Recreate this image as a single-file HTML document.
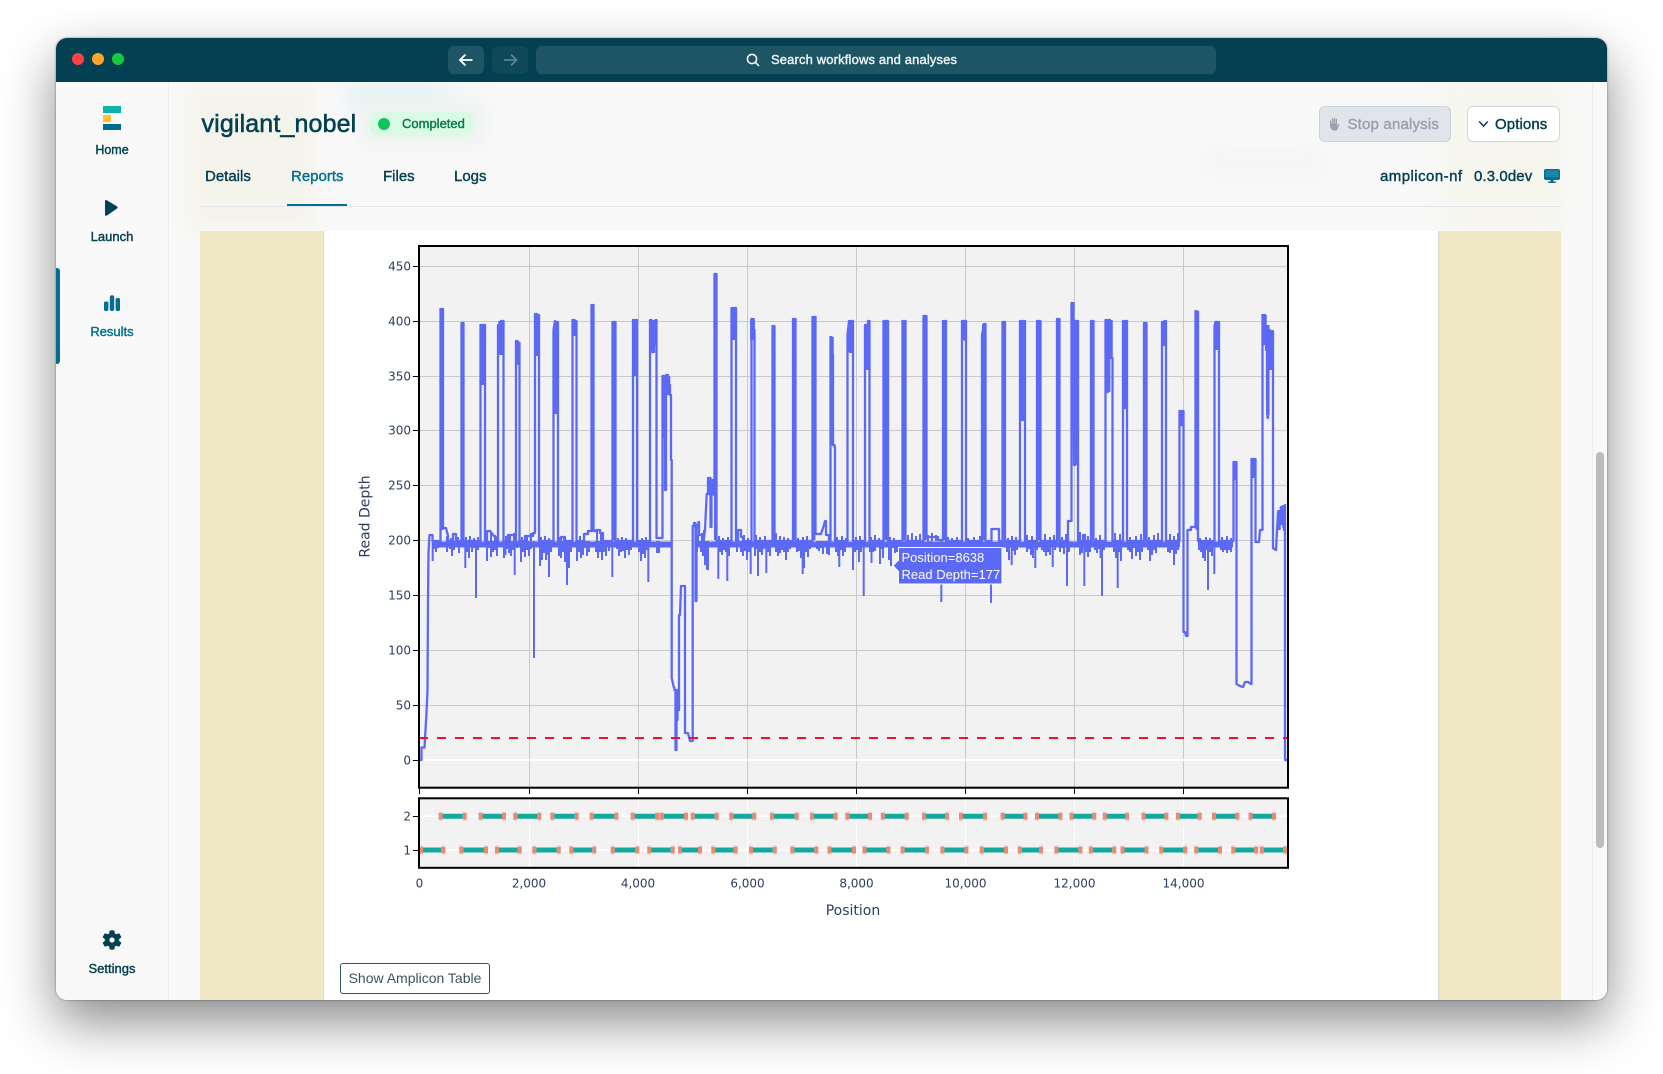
<!DOCTYPE html>
<html lang="en"><head><meta charset="utf-8"><title>vigilant_nobel</title>
<style>
html,body{margin:0;padding:0;width:1663px;height:1074px;background:#fff;overflow:hidden}
*{box-sizing:border-box}
.shadow{position:absolute;left:56px;top:38px;width:1551px;height:962px;border-radius:11px;box-shadow:0 22px 52px 0 rgba(0,0,0,.46),0 0 2px rgba(0,0,0,.45)}
.win{position:absolute;left:56px;top:38px;width:1551px;height:962px;border-radius:11px;overflow:hidden;background:#f9f9f9}
.layer{position:absolute;left:-56px;top:-38px;width:1663px;height:1074px;font-family:"Liberation Sans",sans-serif;color:#044050}
.a{position:absolute}
.t{position:absolute;white-space:nowrap;line-height:20px;-webkit-text-stroke:.4px currentColor}
.c{text-align:center}
</style></head><body>
<div class="shadow"></div>
<div class="win"><div class="layer">
  <!-- soft tints -->
  <div class="a" style="left:186px;top:82px;width:130px;height:150px;background:#f5f4ec;filter:blur(8px)"></div>
  <div class="a" style="left:1440px;top:82px;width:125px;height:150px;background:#f6f5ee;filter:blur(10px)"></div>
  <div class="a" style="left:345px;top:82px;width:105px;height:26px;background:#e4f2f5;filter:blur(10px)"></div>
  <div class="a" style="left:360px;top:100px;width:125px;height:46px;background:#edf3ef;filter:blur(10px)"></div>
  <div class="a" style="left:1205px;top:150px;width:120px;height:26px;background:#f4f4f3;filter:blur(10px)"></div>

  <!-- titlebar -->
  <div class="a" style="left:56px;top:38px;width:1551px;height:44px;background:#034052"></div>
  <div class="a" style="left:72px;top:53px;width:12px;height:12px;border-radius:50%;background:#ff4245"></div>
  <div class="a" style="left:92px;top:53px;width:12px;height:12px;border-radius:50%;background:#ffa52e"></div>
  <div class="a" style="left:112px;top:53px;width:12px;height:12px;border-radius:50%;background:#17c93f"></div>
  <div class="a" style="left:448px;top:46px;width:36px;height:28px;border-radius:6px;background:#1d5564"></div>
  <div class="a" style="left:492px;top:46px;width:36px;height:28px;border-radius:6px;background:#0f4858"></div>
  <div class="a" style="left:536px;top:46px;width:680px;height:28px;border-radius:6px;background:#1d5564"></div>
  <svg class="a" style="left:0;top:0" width="1663" height="90" fill="none">
    <path d="M472.500 60H460.500M465.500 54.500L460 60L465.500 65.500" stroke="#fff" stroke-width="1.800"/>
    <path d="M504 60H516M511 54.500L516.500 60L511 65.500" stroke="#5b8590" stroke-width="1.800"/>
    <circle cx="752" cy="59" r="4.600" stroke="#fff" stroke-width="1.500"/>
    <path d="M755.500 62.500L759 66" stroke="#fff" stroke-width="1.500"/>
  </svg>
  <div class="t" style="left:771px;top:50px;font-size:13px;letter-spacing:.14px;color:#eef4f5">Search workflows and analyses</div>

  <!-- sidebar -->
  <div class="a" style="left:56px;top:82px;width:113px;height:918px;background:#f9f9f9;border-right:1px solid #efefef"></div>
  <div class="a" style="left:56px;top:268px;width:4px;height:96px;border-radius:0 3px 3px 0;background:#026f93"></div>
  <div class="a" style="left:103px;top:106px;width:18px;height:6.500px;background:#0cb4a8"></div>
  <div class="a" style="left:103px;top:115px;width:7.500px;height:6.500px;background:#ffbf2f"></div>
  <div class="a" style="left:103px;top:123.500px;width:18px;height:6.500px;background:#026b8f"></div>
  <div class="t c" style="left:72px;top:140px;width:80px;font-size:12.500px">Home</div>
  <svg class="a" style="left:99px;top:195px" width="26" height="26"><path d="M6 6.200C6 5.200 6.900 4.700 7.800 5.200L18 11.400C18.800 11.900 18.800 13 18 13.500L7.800 20.600C6.900 21.100 6 20.600 6 19.600Z" fill="#034052"/></svg>
  <div class="t c" style="left:72px;top:227px;width:80px;font-size:13px">Launch</div>
  <svg class="a" style="left:100px;top:291px" width="24" height="24" fill="#026f93"><rect x="4" y="10.500" width="4.400" height="9.500" rx="1.600"/><rect x="9.800" y="4.300" width="4.400" height="15.700" rx="2"/><rect x="15.600" y="7" width="4.400" height="13" rx="1.600"/></svg>
  <div class="t c" style="left:72px;top:322px;width:80px;font-size:13px;color:#026f93">Results</div>
  <svg class="a" style="left:100px;top:928px" width="24" height="24" viewBox="0 0 24 24"><path fill="#034052" d="M19.14 12.94c.04-.3.06-.61.06-.94 0-.32-.02-.64-.07-.94l2.03-1.58a.49.49 0 0 0 .12-.61l-1.92-3.32a.488.488 0 0 0-.59-.22l-2.39.96c-.5-.38-1.03-.7-1.62-.94l-.36-2.54a.484.484 0 0 0-.48-.41h-3.84c-.24 0-.43.17-.47.41l-.36 2.54c-.59.24-1.13.57-1.62.94l-2.39-.96c-.22-.08-.47 0-.59.22L2.74 8.87c-.12.21-.08.47.12.61l2.03 1.58c-.05.3-.09.63-.09.94s.02.64.07.94l-2.03 1.58a.49.49 0 0 0-.12.61l1.92 3.32c.12.22.37.29.59.22l2.39-.96c.5.38 1.03.7 1.62.94l.36 2.54c.05.24.24.41.48.41h3.84c.24 0 .44-.17.47-.41l.36-2.54c.59-.24 1.13-.56 1.62-.94l2.39.96c.22.08.47 0 .59-.22l1.92-3.32c.12-.22.07-.47-.12-.61l-2.01-1.58zM12 14.6c-1.4 0-2.6-1.2-2.6-2.6s1.2-2.6 2.6-2.6 2.6 1.2 2.6 2.6-1.2 2.6-2.6 2.6z"/></svg>
  <div class="t c" style="left:72px;top:959px;width:80px;font-size:13px">Settings</div>

  <!-- header -->
  <div class="t" style="left:201.500px;top:111px;font-size:25px;line-height:26px;letter-spacing:.14px;-webkit-text-stroke:.55px currentColor;color:#034052">vigilant_nobel</div>
  <div class="a" style="left:370px;top:112px;width:103px;height:24px;border-radius:7px;background:#d9fae4"></div>
  <div class="a" style="left:378px;top:118px;width:12px;height:12px;border-radius:50%;background:#10c45c"></div>
  <div class="t" style="left:402px;top:114px;font-size:13px;color:#0a7a45">Completed</div>

  <div class="a" style="left:1319px;top:106px;width:132px;height:36px;border-radius:6px;background:#e1e4e9;border:1px solid #ced3da"></div>
  <svg class="a" style="left:1327px;top:116px" width="16" height="16" fill="#9aa1ac"><path d="M3 9V5.200c0-1 1.300-1 1.300 0V8h.5V3.200c0-1 1.400-1 1.400 0V7.500h.5V2.500c0-1 1.400-1 1.400 0v5h.5V3.500c0-1 1.400-1 1.400 0V10l1-1.600c.6-.9 1.800-.3 1.300.6l-1.700 3.600C10.600 14 9.600 14.600 8 14.600c-2.800 0-5-1.600-5-5.600z"/></svg>
  <div class="t" style="left:1347.500px;top:115px;font-size:15px;letter-spacing:.18px;color:#9aa1ac">Stop analysis</div>
  <div class="a" style="left:1467px;top:106px;width:93px;height:36px;border-radius:6px;background:#fff;border:1px solid #d3d6dc"></div>
  <svg class="a" style="left:1477px;top:118px" width="14" height="12" fill="none"><path d="M2.200 3.500L6.500 8L10.800 3.500" stroke="#034052" stroke-width="1.500"/></svg>
  <div class="t" style="left:1495px;top:115px;font-size:15px;letter-spacing:.1px;color:#034052">Options</div>

  <!-- tabs -->
  <div class="t" style="left:205px;top:167px;font-size:15px">Details</div>
  <div class="t" style="left:291px;top:167px;font-size:15px;color:#026f93">Reports</div>
  <div class="t" style="left:383px;top:167px;font-size:15px">Files</div>
  <div class="t" style="left:454px;top:167px;font-size:15px">Logs</div>
  <div class="a" style="left:201px;top:206px;width:1360px;height:1px;background:#e2e4e9"></div>
  <div class="a" style="left:287px;top:204px;width:60px;height:2px;background:#026f93"></div>
  <div class="t" style="left:1380px;top:167px;font-size:15px;letter-spacing:.45px">amplicon-nf</div>
  <div class="t" style="left:1474px;top:167px;font-size:15px;letter-spacing:.1px">0.3.0dev</div>
  <svg class="a" style="left:1544px;top:168px" width="17" height="16"><path d="M1.800 1H14.200C15.200 1 16 1.800 16 2.800V10.200C16 11.200 15.200 12 14.200 12H1.800C.8 12 0 11.200 0 10.200V2.800C0 1.800.8 1 1.800 1Z" fill="#026f93"/><rect x="1.500" y="2.500" width="13" height="6.700" fill="#1b86ab"/><rect x="6.500" y="12" width="3" height="2" fill="#026f93"/><rect x="4" y="13.500" width="8" height="1.500" rx=".7" fill="#026f93"/></svg>

  <!-- content -->
  <div class="a" style="left:200px;top:231px;width:1361px;height:769px;background:#fff"></div>
  <div class="a" style="left:200px;top:231px;width:124px;height:769px;background:#f0e8c4;border-right:1px solid #dcdcd0"></div>
  <div class="a" style="left:1438px;top:231px;width:123px;height:769px;background:#f0e8c4;border-left:1px solid #dcdcd0"></div>

  <!-- scroll -->
  <div class="a" style="left:1592px;top:82px;width:1px;height:918px;background:#ececec"></div>
  <div class="a" style="left:1596px;top:452px;width:8px;height:396px;border-radius:4px;background:#bcbcbc"></div>

  <!-- plot -->
  <svg class="a" style="left:0;top:0" width="1663" height="1074" fill="none" font-family="'DejaVu Sans',sans-serif">
    <rect x="419" y="246" width="869" height="541.700" fill="#f2f2f2"/>
    <rect x="419" y="798.300" width="869" height="69.500" fill="#f2f2f2"/>
    <path stroke="#c9c9c9" stroke-width="1" d="M529.500 246V787M638.500 246V787M747.500 246V787M856.500 246V787M965.500 246V787M1074.500 246V787M1183.500 246V787M419 266.500H1288M419 321.500H1288M419 376.500H1288M419 430.500H1288M419 485.500H1288M419 540.500H1288M419 595.500H1288M419 650.500H1288M419 705.500H1288"/>
    <path stroke="#fff" stroke-width="2" d="M419 760H1288"/>
    <path stroke="#fff" stroke-width="1" d="M529.500 798V867M638.500 798V867M747.500 798V867M856.500 798V867M965.500 798V867M1074.500 798V867M1183.500 798V867"/>
    <path stroke="#fff" stroke-width="1.500" d="M419 816.300H1288M419 850H1288"/>

    <!-- noise comb -->
    <path stroke="#5b69f6" stroke-width="6" d="M432 544.500H671M697 544.500H1180M1199 544.500H1233"/>
    <path stroke="#5b69f6" stroke-width="2" d="M432.700 541V561M434 541V549M436 541V552M438 541V548M447 541V552M450 541V549M452 541V556M454 541V550M457 541V547M459 541V553M465.300 541V568M467 541V552M469 541V558M472 541V552M474 541V548M476 541V598M478 541V550M487 541V561M489 541V548M491 541V557M493 541V552M495 541V550M497 541V556M504 541V558M505.500 541V555M507 541V549M509 541V553M511 541V556M513 541V550M514.700 541V575M517 541V548M521 541V562M523 541V552M525 541V557M527 541V550M529 541V556M531 541V549M534 541V658M540 541V566M542 541V560M544 541V553M546 541V560M548 541V555M549 541V577M551 541V552M559 541V556M561 541V558M563 541V552M565 541V562M567 541V585M569 541V568M571 541V552M577 541V561M579 541V552M581 541V558M583 541V555M585 541V548M587 541V556M589 541V552M596 541V552M598 541V558M600 541V552M602 541V560M604 541V552M606 541V556M609 541V551M612.300 541V577M617 541V549M619 541V556M621 541V552M623 541V551M625 541V558M627 541V550M629 541V555M631 541V550M639 541V552M641 541V561M643 541V554M645 541V558M647 541V550M648.300 541V582M657 541V553M659 541V553M697 541V552M699 541V545M701 541V552M703 541V556M705 541V565M707 541V570M708 541V570M718.300 541V579M720 541V552M722 541V555M724 541V550M726 541V552M727.300 541V581M729 541V556M737 541V552M739 541V547M741 541V552M743 541V556M745 541V551M747 541V560M749 541V552M750.700 541V574M755 541V556M756.500 541V549M758 541V576M760 541V552M762 541V555M764 541V549M766.300 541V573M768 541V552M770 541V556M776 541V552M778 541V556M780 541V553M782 541V550M784 541V552M786 541V560M788 541V552M790 541V549M797 541V552M799 541V551M801 541V558M802.700 541V574M804 541V568M806 541V552M808 541V557M810 541V549M817 541V549M819 541V551M821 541V548M823 541V554M825 541V546M827 541V554M829 541V555M836 541V552M838 541V556M839.300 541V567M841 541V550M843 541V556M845 541V552M853 541V570M855 541V552M857 541V550M859 541V562M861 541V552M863.700 541V596M870 541V552M871.500 541V563M873 541V552M875 541V551M877 541V544M880 541V564M881.500 541V549M883 541V558M889 541V560M891 541V566M893 541V548M895 541V553M897 541V552M899 541V550M901 541V550M907 541V547M909 541V552M912 541V547M915 541V550M918 541V546M921 541V549M928 541V550M931 541V546M941.300 541V602M948 541V549M952 541V548M955 541V550M958 541V547M968 541V550M971 541V548M975 541V550M978 541V547M988 541V549M991 541V603M1002 541V547M1007 541V552M1009 541V560M1011.700 541V565M1013 541V551M1015 541V555M1017 541V550M1027 541V552M1029 541V549M1031 541V555M1033 541V558M1035.300 541V568M1037 541V550M1042 541V550M1044 541V552M1046 541V556M1048 541V552M1050 541V555M1052.700 541V567M1055 541V550M1060 541V552M1062 541V548M1064 541V554M1067 541V586M1069 541V552M1080 541V555M1082 541V553M1084.300 541V586M1086 541V552M1088 541V557M1090 541V552M1095 541V550M1097 541V553M1099 541V549M1100.500 541V558M1102 541V596M1104 541V550M1114 541V552M1116 541V558M1117.700 541V588M1119 541V552M1121 541V561M1128 541V550M1130 541V552M1132 541V559M1134 541V548M1136 541V556M1138 541V552M1140 541V560M1142 541V552M1148 541V550M1150 541V561M1152 541V555M1154 541V550M1156 541V553M1158 541V546M1168 541V552M1170 541V553M1172 541V550M1174 541V565M1176 541V554M1178 541V550M1199 541V550M1201 541V552M1203 541V558M1205 541V561M1207 541V550M1208 541V590M1210 541V552M1212 541V556M1214.300 541V574M1221 541V550M1223 541V552M1225 541V550M1227 541V553M1229 541V550M1231 541V552"/>
    <!-- top noise -->
    <path stroke="#5b69f6" stroke-width="2" d="M447 541V536M451 541V538M458 541V537M466 541V537M470 541V536M474 541V538M478 541V537M491 541V533M495 541V535M506 541V536M510 541V534M514 541V533M522 541V537M527 541V535M531 541V533M541 541V537M545 541V536M549 541V538M560 541V537M564 541V538M580 541V536M584 541V534M597 541V531M601 541V533M618 541V538M622 541V537M626 541V538M642 541V538M646 541V537M698 541V535M702 541V533M704 541V530M719 541V536M723 541V538M728 541V537M737 541V531M744 541V535M748 541V538M756 541V535M760 541V537M765 541V536M776 541V533M780 541V536M784 541V537M788 541V538M798 541V538M803 541V537M807 541V536M837 541V537M842 541V536M846 541V538M856 541V537M860 541V536M871 541V537M875 541V535M879 541V538M890 541V537M894 541V538M908 541V535M912 541V533M916 541V536M920 541V534M928 541V535M932 541V533M936 541V535M948 541V537M952 541V538M957 541V537M968 541V538M974 541V537M980 541V536M1008 541V538M1012 541V536M1016 541V537M1027 541V535M1032 541V536M1045 541V534M1050 541V537M1054 541V535M1062 541V537M1066 541V534M1080 541V532M1088 541V536M1096 541V538M1100 541V535M1115 541V533M1120 541V534M1130 541V537M1136 541V536M1141 541V534M1149 541V537M1154 541V535M1158 541V533M1170 541V534M1174 541V536M1178 541V533M1200 541V538M1206 541V537M1210 541V538M1222 541V537M1227 541V536M1231 541V538"/>

    <!-- solid spike bodies -->
    <path stroke="#5b69f6" stroke-linecap="butt" d="M441.700 309V530" stroke-width="4.200"/>
    <path stroke="#5b69f6" stroke-width="3.500" d="M462.700 323V541M592.700 305V530M614 322V540M794 319V540M904 321V540M925 316V540M944.700 321V540M1197.300 311V530M1145 323V540M1038.700 321V540"/>
    <path stroke="#5b69f6" stroke-width="3" d="M715.500 274V540M773.300 326V540M983.500 324V540M1003.700 322V540M1058.300 319V540M1092.300 321V540M814 362V540M886 375V540"/>
    <path stroke="#5b69f6" stroke-width="4.800" d="M483 325V385M500.700 321V355M537 314V355M556 321V413M574.500 320V335M634.800 320V375M733.500 308V340M752.500 319V340M814 317V362M850.500 321V352M886 321V375M963.700 321V340M1022.500 321V420M1108 320V392M1124.700 321V408M1163.700 322V345M1181.700 411V425M1216.500 322V350M1253.500 459V478M1235 462V480"/>
    <path stroke="#5b69f6" stroke-width="3.500" d="M517.500 341V365M651.500 320V350M655 320V345M665.300 375V437M668.500 377V395M832 337V445M867.500 325V370M1072.700 303V365M1076.500 321V465M1111 320V357M1265 315V345M1267.800 325V415M1271 331V370M1281.500 507V525M1279 510V530M1284 505V528M710 480V495M712.500 480V495"/>

    <!-- main trace -->
    <path stroke="#5b69f6" stroke-width="2.300" stroke-linejoin="round" d="M419.500 760H421.500V747.500H424.500L425.500 730 426.500 713 427.500 690 428 600 428.500 553 429.500 535H432.500V541H440.500V309H443V528H446L448 536V541H453V534H456V541H461.500V323H463.500V541H480.500V325H482V370H483.500V325H485V541H487V531H490L494 536 497 538V541H498V325H499.500V353H501V321H503.500V541H508V535H515V541H516V341H517.500V362H518.500V343H519.500V541H525V536H533V533H535V314H537V355H537.500V315H539V541H553.500V330L555 321V413H556V322H558V541H561V537H565V541H572.500V320H574.500V335H575V321H576.500V541H584V534H588V531H591.500V305H593.500V531H596V530H600V533H603V541H612.500V322H615.500V541H633V320H634.500V375H635.500V320H637V541H650V320H651.500V352H654V325H655.500V320H656.500V538H662.500V376H664V437H665V490H666V375H668V377H669V385H670V395H671V460H671.700V678L674 688H674.500V690H675.500V750H676.500V720H677.500V690H678.500V710H679V615H680L681 586H685V733H688L690 741H692.700V526H694V523H695.500V601H696.500V525H698.500V522H699V535H703V545L705 530 706.700 494H708V478H710.500V527H711.500V480H714V495H714.500V274H716.500V541H731.500V308H734.500V335H735V308H736V541H738V530H741V537H743V541H751.500V319H753.500V330H754.500V541H772.500V326H774.500V541H793V319H795.500V541H812.500V317H815.500V534H821L824 525 825 521H826V535H829V541H830.500V337H831.500V360H832V402H832.500V355H833V445H834.500V447H835V541H847.500V335L849 321H850V352H851V321H853V541H865V325H867V368H868V321H869.500V541H883.500V321H886V375H887V321H888V541H902.500V321H905.500V541H923.500V316H926.500V537H938V540H943V321H946V541H962V321H965V340H965.500V321H966V541H982V335L984 324H985.500V541H991.500V529H999V541H1002.500V322H1005V541H1020V321H1022V420H1023V321H1025V541H1037V321H1040.500V541H1057V319H1059.500V541H1068V521H1071.500V303H1073.500V360L1074 465H1075V321H1078V541H1083V535H1085V541H1091V321H1093.500V541H1105.500V320H1107V392H1108V320H1110V355H1111V358H1112.500V541H1123V321H1124.500V408H1125.500V321H1127V541H1144V323H1146.500V541H1162V322H1163.500V345H1164.500V321H1166V541H1179.500V411H1181V425H1182V411H1183.500V632H1185L1186 636H1187.500V530H1191V527H1195.500V311L1198 312V541H1214.500V326L1215.500 322H1217V345H1217.500V322H1219V541H1233.500V462H1236.500V684L1240 686 1243 687 1245 682H1248L1251 684H1251.500V459H1255.500V542H1259L1260 530H1262.500V315H1265V340H1266V350H1267V400H1267.500V418H1268V330H1269.500V360H1270V331H1273V548L1276 550 1278 512H1281V507H1284V530H1285V505V760H1287"/>

    <!-- threshold -->
    <path stroke="#ff0a2c" stroke-width="2" stroke-dasharray="9 9" d="M419 738H1288"/>

    <!-- frames & ticks -->
    <path stroke="#000" stroke-width="1" d="M413 266.500H419M413 321.500H419M413 376.500H419M413 430.500H419M413 485.500H419M413 540.500H419M413 595.500H419M413 650.500H419M413 705.500H419M413 760.500H419M413 816.500H419M413 850.500H419M419.500 788V794M529.500 788V794M638.500 788V794M747.500 788V794M856.500 788V794M965.500 788V794M1074.500 788V794M1183.500 788V794"/>
    <rect x="419" y="246" width="869" height="541.700" stroke="#000" stroke-width="2"/>

    <!-- amplicons -->
    <defs><path id="s" d="M438.700 816.300H466.700M478.700 816.300H506M513.300 816.300H541.300M550.300 816.300H578.700M589.700 816.300H618.300M630.700 816.300H659.300M659.700 816.300H688M690.700 816.300H718.700M729.300 816.300H756.300M770 816.300H798.700M810 816.300H837.700M845.300 816.300H872M880.800 816.300H908.700M922 816.300H949M959 816.300H987M1000.600 816.300H1027.500M1035 816.300H1062.500M1069.500 816.300H1096.300M1102.800 816.300H1129M1141.500 816.300H1168.400M1176 816.300H1201.700M1212 816.300H1239.400M1248.500 816.300H1276M419.500 850H445.300M459.300 850H488M495 850H521.700M532.300 850H560.700M569.300 850H596.300M610.700 850H639.300M647.300 850H674.700M678 850H702M711.300 850H737.700M749 850H776.700M790.300 850H818.300M827.500 850H856M862.500 850H890.400M900.600 850H929M940.400 850H968.400M979.700 850H1008M1017.800 850H1043M1054.400 850H1082.400M1088.800 850H1116.200M1120.500 850H1148.500M1159.300 850H1187.200M1194.200 850H1222M1231.300 850H1258.200M1259.800 850H1287"/>
    <path id="m" d="M442.700 816.300H462.700M482.700 816.300H502M517.300 816.300H537.300M554.300 816.300H574.700M593.700 816.300H614.300M634.700 816.300H655.300M663.700 816.300H684M694.700 816.300H714.700M733.300 816.300H752.300M774 816.300H794.700M814 816.300H833.700M849.300 816.300H868M884.800 816.300H904.700M926 816.300H945M963 816.300H983M1004.600 816.300H1023.500M1039 816.300H1058.500M1073.500 816.300H1092.300M1106.800 816.300H1125M1145.500 816.300H1164.400M1180 816.300H1197.700M1216 816.300H1235.400M1252.500 816.300H1272M423 850H441.300M463.300 850H484M499 850H517.700M536.300 850H556.700M573.300 850H592.300M614.700 850H635.300M651.300 850H670.700M682 850H698M715.300 850H733.700M753 850H772.700M794.300 850H814.300M831.500 850H852M866.500 850H886.400M904.600 850H925M944.400 850H964.400M983.700 850H1004M1021.800 850H1039M1058.400 850H1078.400M1092.800 850H1112.200M1124.500 850H1144.500M1163.300 850H1183.200M1198.200 850H1218M1235.300 850H1254.200M1263.800 850H1283"/></defs>
    <use href="#s" stroke="#ea8a75" stroke-width="9" opacity=".3"/>
    <use href="#s" stroke="#ea8a75" stroke-width="6.500"/>
    <use href="#m" stroke="#f2f2f2" stroke-width="9.500"/>
    <use href="#m" stroke="#14a99e" stroke-width="5"/>
    <rect x="419" y="798.300" width="869" height="69.500" stroke="#000" stroke-width="2"/>

    <!-- labels -->
    <g font-size="12" fill="#2a3f5f" text-anchor="end">
      <text x="411" y="270.500">450</text><text x="411" y="325.500">400</text><text x="411" y="380.500">350</text><text x="411" y="434.500">300</text><text x="411" y="489.500">250</text><text x="411" y="544.500">200</text><text x="411" y="599.500">150</text><text x="411" y="654.500">100</text><text x="411" y="709.500">50</text><text x="411" y="764.500">0</text><text x="411" y="820.500">2</text><text x="411" y="854.500">1</text>
    </g>
    <g font-size="12" fill="#2a3f5f" text-anchor="middle">
      <text x="419.500" y="887.500">0</text><text x="529" y="887.500">2,000</text><text x="638" y="887.500">4,000</text><text x="747.500" y="887.500">6,000</text><text x="856.500" y="887.500">8,000</text><text x="965.500" y="887.500">10,000</text><text x="1074.500" y="887.500">12,000</text><text x="1183.500" y="887.500">14,000</text>
    </g>
    <text x="853" y="915" font-size="14" fill="#2a3f5f" text-anchor="middle">Position</text>
    <text transform="translate(369.500 516.500) rotate(-90)" font-size="14" fill="#2a3f5f" text-anchor="middle">Read Depth</text>

    <!-- tooltip -->
    <path d="M898.500 547.500H1002V584H898.500V571.500L893 565.700L898.500 560Z" fill="#5b69f6" stroke="#fff" stroke-width="1"/>
    <g font-family="'Liberation Sans',sans-serif" font-size="13" fill="#fff">
      <text x="901.500" y="562">Position=8638</text>
      <text x="901.500" y="579">Read Depth=177</text>
    </g>
  </svg>

  <!-- bottom button -->
  <div class="a" style="left:340px;top:963px;width:150px;height:31px;border:1px solid #2f5563;border-radius:3px;background:#fff;font:14px/29px 'Liberation Sans',sans-serif;color:#3a5560;text-align:center">Show Amplicon Table</div>
</div></div>
</body></html>
